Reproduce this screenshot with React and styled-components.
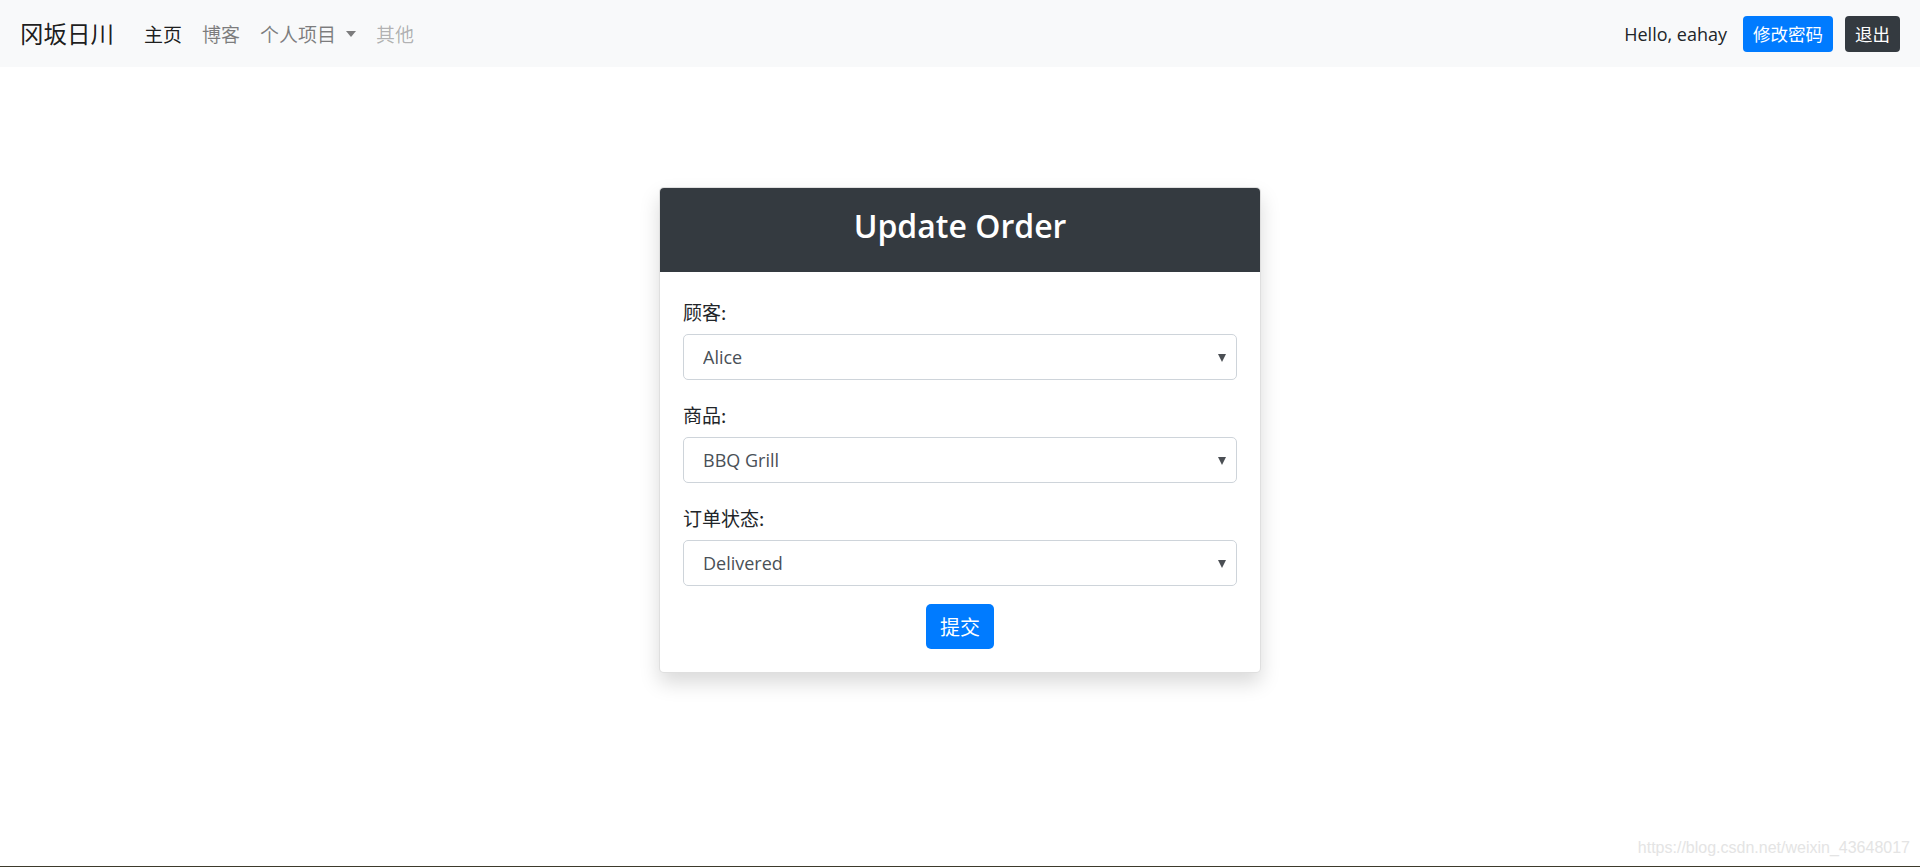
import React, { useState } from "react";
import styled, { createGlobalStyle } from "styled-components";

const GlobalStyle = createGlobalStyle`
  html, body {
    margin: 0;
    padding: 0;
    background: #fff;
  }
  body {
    font-family: "Open Sans", "Noto Sans CJK SC", sans-serif;
    color: #212529;
  }
  * {
    box-sizing: border-box;
  }
`;

const customers = ["Alice", "Bob", "Carol"];
const products = ["BBQ Grill", "Tent", "Sleeping Bag"];
const statuses = ["Pending", "Shipped", "Delivered"];

export default function App() {
  const [customer, setCustomer] = useState("Alice");
  const [product, setProduct] = useState("BBQ Grill");
  const [status, setStatus] = useState("Delivered");

  return (
    <>
      <GlobalStyle />
      <Page>
        <Navbar>
          <Brand href="#">冈坂日川</Brand>
          <NavList>
            <NavLink href="#" $state="active">
              主页
            </NavLink>
            <NavLink href="#">博客</NavLink>
            <NavLink href="#" $caret>
              个人项目
            </NavLink>
            <NavLink href="#" $state="disabled">
              其他
            </NavLink>
          </NavList>
          <UserArea>
            <Hello>Hello, eahay</Hello>
            <SmallButton $variant="primary">修改密码</SmallButton>
            <SmallButton $variant="dark">退出</SmallButton>
          </UserArea>
        </Navbar>

        <Main>
          <Card>
            <CardHeader>
              <Title>Update Order</Title>
            </CardHeader>
            <CardBody>
              <FormGroup>
                <Label>顾客:</Label>
                <SelectWrap>
                  <Select
                    value={customer}
                    onChange={(e) => setCustomer(e.target.value)}
                  >
                    {customers.map((c) => (
                      <option key={c}>{c}</option>
                    ))}
                  </Select>
                </SelectWrap>
              </FormGroup>
              <FormGroup>
                <Label>商品:</Label>
                <SelectWrap>
                  <Select
                    value={product}
                    onChange={(e) => setProduct(e.target.value)}
                  >
                    {products.map((p) => (
                      <option key={p}>{p}</option>
                    ))}
                  </Select>
                </SelectWrap>
              </FormGroup>
              <FormGroup>
                <Label>订单状态:</Label>
                <SelectWrap>
                  <Select
                    value={status}
                    onChange={(e) => setStatus(e.target.value)}
                  >
                    {statuses.map((s) => (
                      <option key={s}>{s}</option>
                    ))}
                  </Select>
                </SelectWrap>
              </FormGroup>
              <Actions>
                <SubmitButton type="button">提交</SubmitButton>
              </Actions>
            </CardBody>
          </Card>
        </Main>

        <Footer>
          <Watermark>https://blog.csdn.net/weixin_43648017</Watermark>
        </Footer>
      </Page>
    </>
  );
}

const Page = styled.div`
  display: flex;
  flex-direction: column;
  height: 867px;
  border-bottom: 1px solid #3d3a2c;
`;

const Navbar = styled.nav`
  display: flex;
  align-items: center;
  height: 67px;
  padding: 0 20px;
  background: #f8f9fa;
  flex-shrink: 0;
`;

const Brand = styled.a`
  font-size: 23.5px;
  line-height: 1;
  color: rgba(0, 0, 0, 0.9);
  text-decoration: none;
  margin-right: 20px;
  font-family: "Noto Sans CJK SC", sans-serif;
`;

const NavList = styled.div`
  display: flex;
  align-items: center;
`;

const NavLink = styled.a`
  display: flex;
  align-items: center;
  padding: 0 10px;
  font-size: 19px;
  text-decoration: none;
  font-family: "Noto Sans CJK SC", sans-serif;
  color: ${(p) =>
    p.$state === "active"
      ? "rgba(0, 0, 0, 0.9)"
      : p.$state === "disabled"
      ? "rgba(0, 0, 0, 0.3)"
      : "rgba(0, 0, 0, 0.5)"};

  &::after {
    content: ${(p) => (p.$caret ? '""' : "none")};
    margin-left: 10px;
    border-top: 6px solid rgba(0, 0, 0, 0.5);
    border-left: 5.5px solid transparent;
    border-right: 5.5px solid transparent;
  }
`;

const UserArea = styled.div`
  margin-left: auto;
  display: flex;
  align-items: center;
`;

const Hello = styled.span`
  font-size: 18px;
  color: #212529;
  margin-right: 16px;
`;

const SmallButton = styled.button`
  height: 36px;
  padding: 0 10px;
  border: none;
  border-radius: 4px;
  font-size: 17.5px;
  font-family: "Noto Sans CJK SC", sans-serif;
  color: #fff;
  background: ${(p) => (p.$variant === "primary" ? "#007bff" : "#343a40")};
  margin-left: ${(p) => (p.$variant === "primary" ? "0" : "12px")};
  cursor: pointer;
`;

const Main = styled.main`
  flex: 1;
  display: flex;
  justify-content: center;
  align-items: flex-start;
  padding-top: 120px;
`;

const Card = styled.div`
  width: 602px;
  background: #fff;
  border: 1px solid rgba(0, 0, 0, 0.125);
  border-radius: 5px;
  box-shadow: 0 10px 20px rgba(0, 0, 0, 0.15);
  overflow: hidden;
`;

const CardHeader = styled.div`
  height: 85px;
  margin: -1px -1px 0;
  padding-bottom: 8px;
  display: flex;
  align-items: center;
  justify-content: center;
  background: #343a40;
  border-radius: 5px 5px 0 0;
`;

const Title = styled.h3`
  margin: 0;
  font-size: 32px;
  font-weight: 600;
  color: #fff;
`;

const CardBody = styled.div`
  padding: 25px 23px 23px;
`;

const FormGroup = styled.div`
  margin-bottom: 20px;

  &:nth-last-child(2) {
    margin-bottom: 18px;
  }
`;

const Label = styled.label`
  display: block;
  height: 30px;
  line-height: 30px;
  margin-bottom: 7px;
  font-size: 19px;
  color: #212529;
  font-family: "Noto Sans CJK SC", sans-serif;
`;

const SelectWrap = styled.div`
  position: relative;

  &::after {
    content: "";
    position: absolute;
    right: 11px;
    top: 50%;
    margin-top: -3px;
    border-top: 8px solid #4b4f54;
    border-left: 4px solid transparent;
    border-right: 4px solid transparent;
    pointer-events: none;
  }
`;

const Select = styled.select`
  display: block;
  width: 100%;
  height: 46px;
  padding: 0 30px 0 19px;
  font-family: "Open Sans", sans-serif;
  font-size: 18px;
  color: #495057;
  background: #fff;
  border: 1px solid #ced4da;
  border-radius: 5px;
  appearance: none;
  -webkit-appearance: none;
  outline: none;
`;

const Actions = styled.div`
  display: flex;
  justify-content: center;
`;

const SubmitButton = styled.button`
  height: 45px;
  padding: 0 14px;
  border: none;
  border-radius: 5px;
  background: #007bff;
  color: #fff;
  font-size: 20px;
  font-family: "Noto Sans CJK SC", sans-serif;
  cursor: pointer;
`;

const Footer = styled.div`
  display: flex;
  justify-content: flex-end;
  padding: 0 10px 6px 0;
`;

const Watermark = styled.span`
  font-family: "Liberation Sans", Arial, sans-serif;
  font-size: 16px;
  color: #e4e4e4;
  line-height: 24px;
`;
